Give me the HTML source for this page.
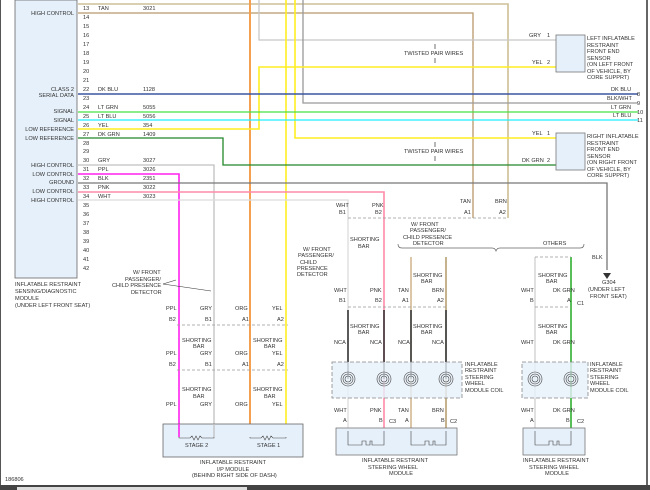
<!DOCTYPE html>
<html><head><style>
html,body{margin:0;padding:0;background:#fff;}
svg{display:block;font-family:"Liberation Sans",Arial,sans-serif;}
text{font-size:5.6px;fill:#333;}
</style></head><body>
<svg width="650" height="490" viewBox="0 0 650 490" xmlns="http://www.w3.org/2000/svg">
<rect width="650" height="490" fill="#fff"/>
<line x1="0.5" y1="0" x2="0.5" y2="486" stroke="#555" stroke-width="1"/>
<line x1="647" y1="0" x2="647" y2="486" stroke="#333" stroke-width="1.5"/>
<rect x="0" y="485" width="650" height="5" fill="#444"/>
<rect x="17" y="487" width="230" height="3" fill="#ddd"/>
<!-- left module -->
<rect x="15" y="0" width="62" height="278" fill="#e6f0fa" stroke="#666" stroke-width="0.8"/>
<g text-anchor="end">
<text x="74" y="15">HIGH CONTROL</text>
<text x="74" y="91">CLASS 2</text><text x="74" y="97">SERIAL DATA</text>
<text x="74" y="113">SIGNAL</text><text x="74" y="122">SIGNAL</text>
<text x="74" y="131">LOW REFERENCE</text><text x="74" y="140">LOW REFERENCE</text>
<text x="74" y="167">HIGH CONTROL</text><text x="74" y="176">LOW CONTROL</text>
<text x="74" y="184">GROUND</text><text x="74" y="193">LOW CONTROL</text>
<text x="74" y="202">HIGH CONTROL</text>
</g>
<text x="15" y="286">INFLATABLE RESTRAINT</text>
<text x="15" y="293">SENSING/DIAGNOSTIC</text>
<text x="15" y="300">MODULE</text>
<text x="15" y="307">(UNDER LEFT FRONT SEAT)</text>
<text x="5" y="481">186806</text>
<g>
<text x="83" y="10">13</text><text x="83" y="19">14</text><text x="83" y="28">15</text><text x="83" y="37">16</text><text x="83" y="46">17</text><text x="83" y="55">18</text><text x="83" y="64">19</text><text x="83" y="73">20</text><text x="83" y="82">21</text><text x="83" y="91">22</text><text x="83" y="100">23</text><text x="83" y="109">24</text><text x="83" y="118">25</text><text x="83" y="127">26</text><text x="83" y="136">27</text><text x="83" y="145">28</text><text x="83" y="153">29</text><text x="83" y="162">30</text><text x="83" y="171">31</text><text x="83" y="180">32</text><text x="83" y="189">33</text><text x="83" y="198">34</text><text x="83" y="207">35</text><text x="83" y="216">36</text><text x="83" y="225">37</text><text x="83" y="234">38</text><text x="83" y="243">39</text><text x="83" y="252">40</text><text x="83" y="261">41</text><text x="83" y="270">42</text>
</g>
<g>
<text x="98" y="10">TAN</text><text x="143" y="10">3021</text>
<text x="98" y="91">DK BLU</text><text x="143" y="91">1128</text>
<text x="98" y="109">LT GRN</text><text x="143" y="109">5055</text>
<text x="98" y="118">LT BLU</text><text x="143" y="118">5056</text>
<text x="98" y="127">YEL</text><text x="143" y="127">354</text>
<text x="98" y="136">DK GRN</text><text x="143" y="136">1409</text>
<text x="98" y="162">GRY</text><text x="143" y="162">3027</text>
<text x="98" y="171">PPL</text><text x="143" y="171">3026</text>
<text x="98" y="180">BLK</text><text x="143" y="180">2351</text>
<text x="98" y="189">PNK</text><text x="143" y="189">3022</text>
<text x="98" y="198">WHT</text><text x="143" y="198">3023</text>
</g>
<!-- wires -->
<g fill="none" stroke-width="1.3">
<polyline points="78,4 508,4 508,218" stroke="#cdbf95" stroke-width="1.6"/>
<polyline points="78,13 473,13 473,218" stroke="#b8976a"/>
<line x1="250" y1="0" x2="250" y2="437" stroke="#f5a050" stroke-width="2"/>
<polyline points="259,0 259,40 556,40" stroke="#c8c8c8"/>
<line x1="286" y1="0" x2="286" y2="437" stroke="#ffee22" stroke-width="1.6"/>
<polyline points="295,0 295,138 556,138" stroke="#ffee22" stroke-width="1.6"/>
<polyline points="303,0 303,103 638,103" stroke="#999"/>
<polyline points="78,129 259,129 259,67 556,67" stroke="#ffee22" stroke-width="1.6"/>
<line x1="78" y1="94" x2="638" y2="94" stroke="#3b55a0" stroke-width="1.6"/>
<line x1="78" y1="112" x2="638" y2="112" stroke="#44e044"/>
<line x1="78" y1="120" x2="638" y2="120" stroke="#22eeff"/>
<polyline points="78,138 223,138 223,165 556,165" stroke="#22882a"/>
<polyline points="78,165 214,165 214,437" stroke="#c0c0c0"/>
<polyline points="78,174 179,174 179,437" stroke="#ff22ee" stroke-width="1.6"/>
<polyline points="78,183 607,183 607,270" stroke="#777"/>
<polyline points="78,192 384,192 384,437" stroke="#ff8aa8" stroke-width="1.6"/>
<polyline points="78,200 348,200 348,437" stroke="#dcdcdc"/>
<line x1="411" y1="257" x2="411" y2="437" stroke="#c8a878"/>
<line x1="446" y1="257" x2="446" y2="437" stroke="#a88a50"/>
<line x1="535" y1="257" x2="535" y2="437" stroke="#d0d0d0"/>
<line x1="571" y1="257" x2="571" y2="437" stroke="#22aa22" stroke-width="1.5"/>
<g stroke="#333" stroke-width="1.6">
<line x1="348" y1="310" x2="348" y2="379"/><line x1="384" y1="310" x2="384" y2="379"/>
<line x1="411" y1="310" x2="411" y2="379"/><line x1="446" y1="310" x2="446" y2="379"/>
</g>
</g>
<!-- ground -->
<polygon points="603,273 611,273 607,279" fill="#333"/>
<text x="592" y="259">BLK</text>
<text x="602" y="284">G304</text>
<text x="588" y="291">(UNDER LEFT</text>
<text x="590" y="298">FRONT SEAT)</text>
<!-- sensors -->
<rect x="556" y="35" width="29" height="37" fill="#e6f0fa" stroke="#777" stroke-width="0.8"/>
<rect x="556" y="133" width="29" height="37" fill="#e6f0fa" stroke="#777" stroke-width="0.8"/>
<g>
<text x="587" y="40">LEFT INFLATABLE</text><text x="587" y="47">RESTRAINT</text><text x="587" y="53">FRONT END</text><text x="587" y="60">SENSOR</text><text x="587" y="66">(ON LEFT FRONT</text><text x="587" y="73">OF VEHICLE, BY</text><text x="587" y="79">CORE SUPPRT)</text>
<text x="587" y="138">RIGHT INFLATABLE</text><text x="587" y="145">RESTRAINT</text><text x="587" y="151">FRONT END</text><text x="587" y="158">SENSOR</text><text x="587" y="164">(ON RIGHT FRONT</text><text x="587" y="171">OF VEHICLE, BY</text><text x="587" y="177">CORE SUPPRT)</text>
<text x="529" y="37">GRY</text><text x="547" y="37">1</text>
<text x="532" y="64">YEL</text><text x="547" y="64">2</text>
<text x="532" y="135">YEL</text><text x="547" y="135">1</text>
<text x="522" y="162">DK GRN</text><text x="547" y="162">2</text>
<text x="611" y="91">DK BLU</text><text x="637" y="96">8</text>
<text x="607" y="100">BLK/WHT</text><text x="637" y="105">9</text>
<text x="611" y="109">LT GRN</text><text x="637" y="114">10</text>
<text x="613" y="117">LT BLU</text><text x="637" y="122">11</text>
<text x="404" y="55">TWISTED PAIR WIRES</text>
<text x="404" y="153">TWISTED PAIR WIRES</text>
</g>
<g stroke="#333" stroke-width="0.7">
<line x1="435" y1="44" x2="435" y2="49"/><line x1="435" y1="58" x2="435" y2="63"/>
<line x1="435" y1="142" x2="435" y2="147"/><line x1="435" y1="156" x2="435" y2="161"/>
</g>
<!-- top connector passenger -->
<text x="336" y="207">WHT</text><text x="372" y="207">PNK</text><text x="460" y="203">TAN</text><text x="495" y="203">BRN</text>
<text x="339" y="214">B1</text><text x="375" y="214">B2</text><text x="464" y="214">A1</text><text x="499" y="214">A2</text>
<line x1="348" y1="218" x2="508" y2="218" stroke="#999" stroke-width="0.7" stroke-dasharray="3,2"/>
<rect x="330" y="183" width="277" height="1" fill="none"/>
<text x="411" y="226">W/ FRONT</text><text x="410" y="232">PASSENGER/</text><text x="403" y="239">CHILD PRESENCE</text><text x="413" y="245">DETECTOR</text>
<text x="543" y="245">OTHERS</text>
<path d="M398,244 q0,4 4,4 h90 q3,0 4,3 q1,-3 4,-3 h80 q4,0 4,-4" fill="none" stroke="#666" stroke-width="0.7"/>
<text x="350" y="241">SHORTING</text><text x="358" y="248">BAR</text>
<text x="303" y="251">W/ FRONT</text><text x="298" y="257">PASSENGER/</text><text x="300" y="264">CHILD</text><text x="297" y="270">PRESENCE</text><text x="297" y="276">DETECTOR</text>
<text x="413" y="277">SHORTING</text><text x="421" y="283">BAR</text>
<text x="538" y="277">SHORTING</text><text x="546" y="283">BAR</text>
<g>
<text x="334" y="292">WHT</text><text x="370" y="292">PNK</text><text x="398" y="292">TAN</text><text x="432" y="292">BRN</text>
<text x="339" y="302">B1</text><text x="375" y="302">B2</text><text x="402" y="302">A1</text><text x="437" y="302">A2</text>
<text x="521" y="292">WHT</text><text x="553" y="292">DK GRN</text>
<text x="530" y="302">B</text><text x="567" y="302">A</text><text x="577" y="305">C1</text>
</g>
<line x1="348" y1="307" x2="446" y2="307" stroke="#999" stroke-width="0.7" stroke-dasharray="3,2"/>
<line x1="535" y1="307" x2="571" y2="307" stroke="#999" stroke-width="0.7" stroke-dasharray="3,2"/>
<line x1="535" y1="257" x2="571" y2="257" stroke="#999" stroke-width="0.7" stroke-dasharray="3,2"/>
<text x="350" y="328">SHORTING</text><text x="358" y="334">BAR</text>
<text x="413" y="328">SHORTING</text><text x="421" y="334">BAR</text>
<text x="538" y="328">SHORTING</text><text x="546" y="334">BAR</text>
<text x="334" y="344">NCA</text><text x="370" y="344">NCA</text><text x="398" y="344">NCA</text><text x="432" y="344">NCA</text>
<text x="521" y="344">WHT</text><text x="553" y="344">DK GRN</text>
<!-- coil boxes -->
<rect x="332" y="362" width="130" height="36" fill="#e6f0fa" fill-opacity="0.8" stroke="#888" stroke-width="0.8" stroke-dasharray="4,2"/>
<rect x="522" y="362" width="66" height="36" fill="#e6f0fa" fill-opacity="0.8" stroke="#888" stroke-width="0.8" stroke-dasharray="4,2"/>
<g fill="none" stroke="#444" stroke-width="0.6">
<circle cx="348" cy="379" r="7"/><circle cx="348" cy="379" r="5"/><circle cx="348" cy="379" r="3"/>
<circle cx="384" cy="379" r="7"/><circle cx="384" cy="379" r="5"/><circle cx="384" cy="379" r="3"/>
<circle cx="411" cy="379" r="7"/><circle cx="411" cy="379" r="5"/><circle cx="411" cy="379" r="3"/>
<circle cx="446" cy="379" r="7"/><circle cx="446" cy="379" r="5"/><circle cx="446" cy="379" r="3"/>
<circle cx="535" cy="379" r="7"/><circle cx="535" cy="379" r="5"/><circle cx="535" cy="379" r="3"/>
<circle cx="571" cy="379" r="7"/><circle cx="571" cy="379" r="5"/><circle cx="571" cy="379" r="3"/>
</g>
<text x="465" y="366">INFLATABLE</text><text x="465" y="372">RESTRAINT</text><text x="465" y="379">STEERING</text><text x="465" y="385">WHEEL</text><text x="465" y="392">MODULE COIL</text>
<text x="590" y="366">INFLATABLE</text><text x="590" y="372">RESTRAINT</text><text x="590" y="379">STEERING</text><text x="590" y="385">WHEEL</text><text x="590" y="392">MODULE COIL</text>
<text x="334" y="412">WHT</text><text x="370" y="412">PNK</text><text x="398" y="412">TAN</text><text x="432" y="412">BRN</text>
<text x="343" y="422">A</text><text x="379" y="422">B</text><text x="405" y="422">A</text><text x="441" y="422">B</text>
<text x="389" y="423">C3</text><text x="450" y="423">C2</text>
<text x="521" y="412">WHT</text><text x="553" y="412">DK GRN</text>
<text x="530" y="422">A</text><text x="566" y="422">B</text><text x="577" y="423">C2</text>
<rect x="336" y="428" width="121" height="27" fill="#e6f0fa" stroke="#777" stroke-width="0.8"/>
<rect x="523" y="428" width="62" height="27" fill="#e6f0fa" stroke="#777" stroke-width="0.8"/>
<g fill="none" stroke="#444" stroke-width="0.6">
<polyline points="348,431 348,445 362,445 362,441 366,441 366,445 370,445 370,441 372,441 372,445 384,445 384,431"/>
<polyline points="411,431 411,445 425,445 425,441 429,441 429,445 433,445 433,441 435,441 435,445 446,445 446,431"/>
<polyline points="535,431 535,445 549,445 549,441 553,441 553,445 557,445 557,441 559,441 559,445 571,445 571,431"/>
</g>
<text x="362" y="462">INFLATABLE RESTRAINT</text><text x="368" y="469">STEERING WHEEL</text><text x="389" y="475">MODULE</text>
<text x="523" y="462">INFLATABLE RESTRAINT</text><text x="529" y="469">STEERING WHEEL</text><text x="545" y="475">MODULE</text>
<!-- I/P module -->
<text x="133" y="274">W/ FRONT</text><text x="125" y="281">PASSENGER/</text><text x="112" y="287">CHILD PRESENCE</text><text x="131" y="294">DETECTOR</text>
<line x1="163" y1="284" x2="176" y2="280" stroke="#333" stroke-width="0.6"/>
<line x1="163" y1="284" x2="211" y2="291" stroke="#333" stroke-width="0.6"/>
<g>
<text x="166" y="310">PPL</text><text x="200" y="310">GRY</text><text x="235" y="310">ORG</text><text x="272" y="310">YEL</text>
<text x="169" y="321">B2</text><text x="205" y="321">B1</text><text x="242" y="321">A1</text><text x="277" y="321">A2</text>
<text x="182" y="342">SHORTING</text><text x="193" y="348">BAR</text>
<text x="253" y="342">SHORTING</text><text x="264" y="348">BAR</text>
<text x="166" y="355">PPL</text><text x="200" y="355">GRY</text><text x="235" y="355">ORG</text><text x="272" y="355">YEL</text>
<text x="169" y="366">B2</text><text x="205" y="366">B1</text><text x="242" y="366">A1</text><text x="277" y="366">A2</text>
<text x="182" y="391">SHORTING</text><text x="193" y="398">BAR</text>
<text x="253" y="391">SHORTING</text><text x="264" y="398">BAR</text>
<text x="166" y="406">PPL</text><text x="200" y="406">GRY</text><text x="235" y="406">ORG</text><text x="272" y="406">YEL</text>
</g>
<line x1="177" y1="325" x2="288" y2="325" stroke="#999" stroke-width="0.7" stroke-dasharray="3,2"/>
<line x1="177" y1="370" x2="288" y2="370" stroke="#999" stroke-width="0.7" stroke-dasharray="3,2"/>
<rect x="163" y="424" width="140" height="33" fill="#e6f0fa" stroke="#666" stroke-width="0.8"/>
<g fill="none" stroke-width="1.3">
<line x1="179" y1="424" x2="179" y2="437" stroke="#ff22ee" stroke-width="1.6"/>
<line x1="214" y1="424" x2="214" y2="437" stroke="#c0c0c0"/>
</g>
<g fill="none" stroke="#444" stroke-width="0.6">
<polyline points="179,437 179,438 190,438 192,436 194,440 196,436 198,440 200,436 202,438 214,438 214,437"/>
<polyline points="250,437 250,438 261,438 263,436 265,440 267,436 269,440 271,436 273,438 286,438 286,437"/>
</g>
<text x="185" y="447">STAGE 2</text><text x="257" y="447">STAGE 1</text>
<text x="200" y="464">INFLATABLE RESTRAINT</text><text x="217" y="471">I/P MODULE</text><text x="192" y="477">(BEHIND RIGHT SIDE OF DASH)</text>
</svg>
</body></html>
